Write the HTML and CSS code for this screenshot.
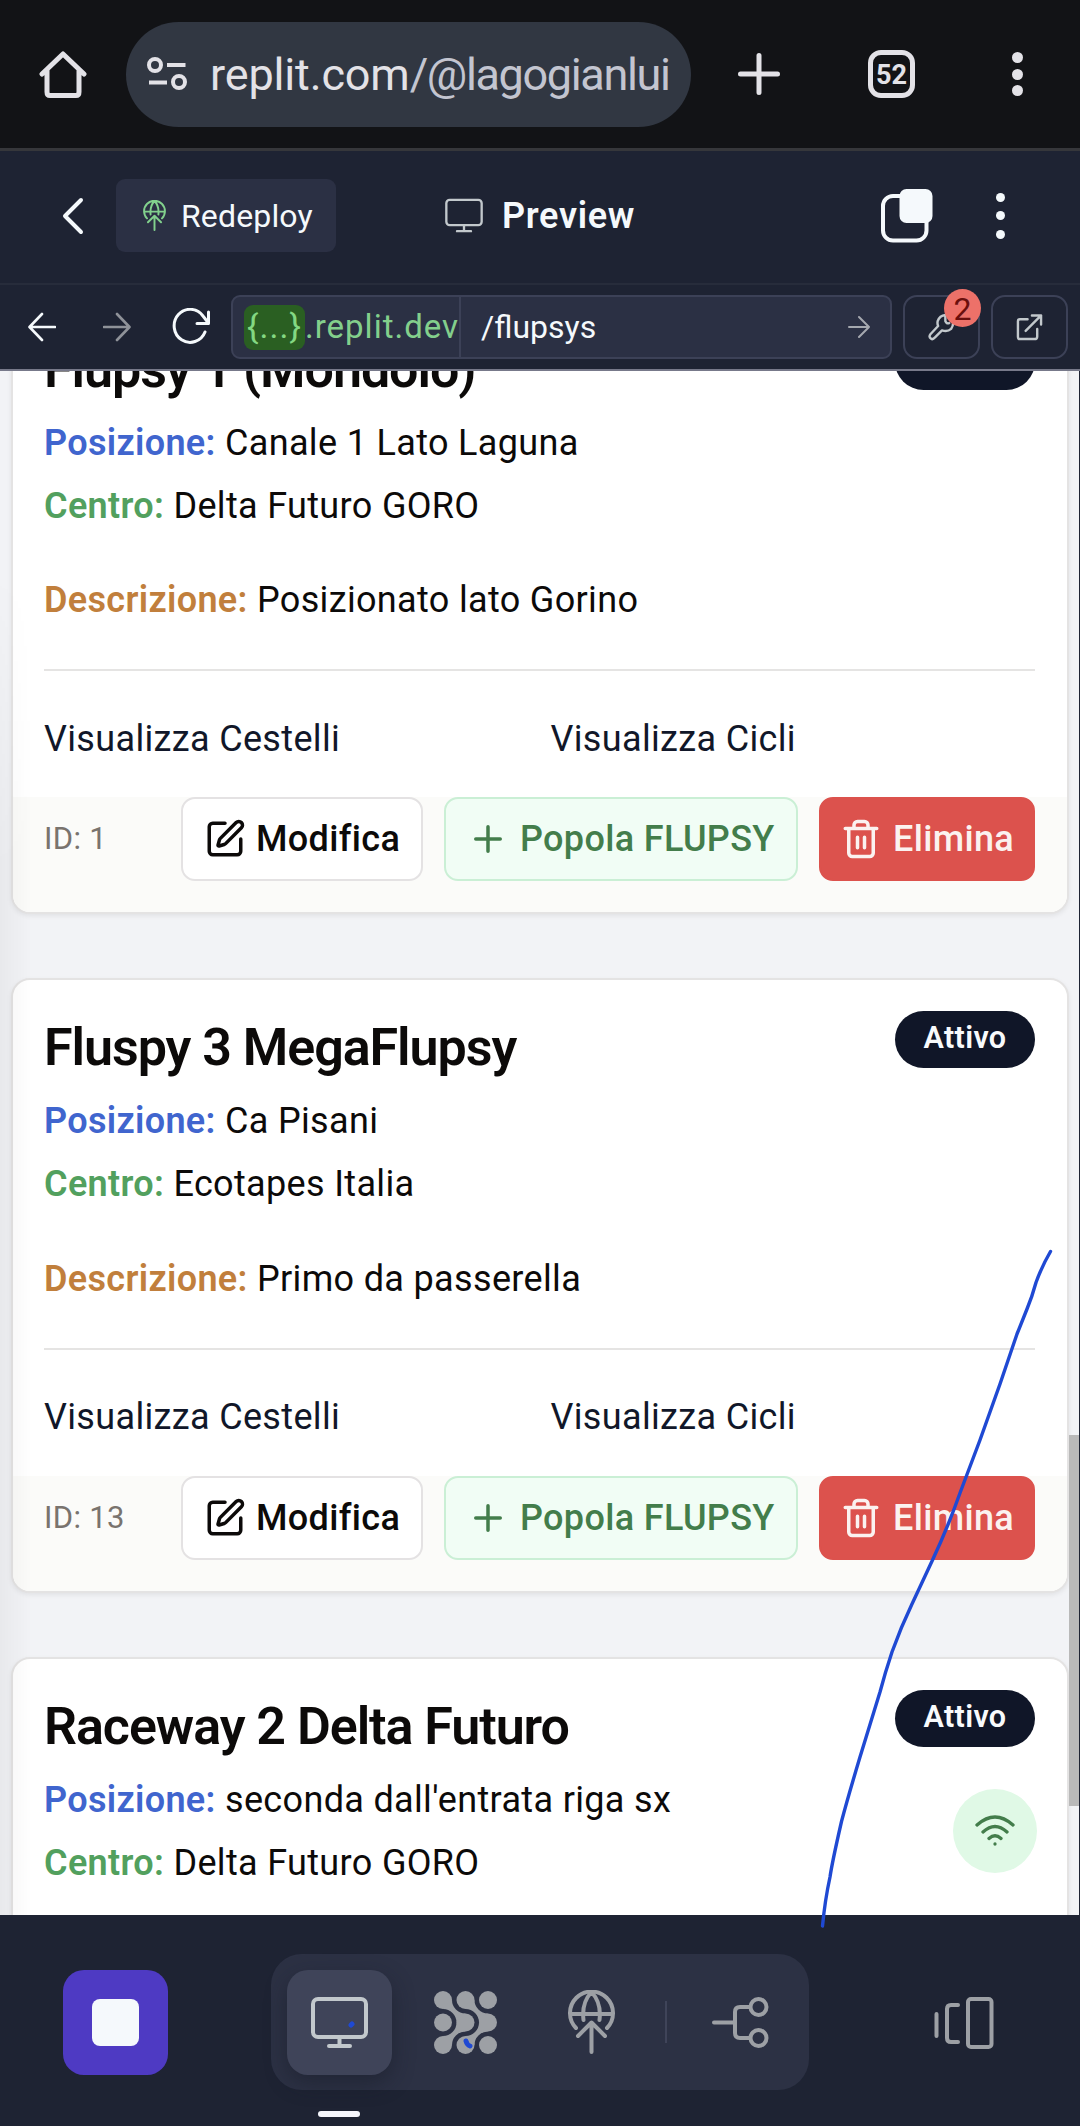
FILE: index.html
```html
<!DOCTYPE html>
<html lang="it">
<head>
<meta charset="utf-8">
<title>Flupsys</title>
<link rel="stylesheet" href="styles.css">
</head>
<body>
<svg class="defs" aria-hidden="true">
  <symbol id="edit" viewBox="0 0 24 24"><path d="M12 3H5a2 2 0 0 0-2 2v14a2 2 0 0 0 2 2h14a2 2 0 0 0 2-2v-7"/><path d="M18.375 2.625a1 1 0 0 1 3 3l-9.013 9.014a2 2 0 0 1-.853.505l-2.873.84a.5.5 0 0 1-.62-.62l.84-2.873a2 2 0 0 1 .506-.852z"/></symbol>
  <symbol id="plus" viewBox="0 0 24 24"><path d="M5 12h14M12 5v14"/></symbol>
  <symbol id="trash" viewBox="0 0 24 24"><path d="M3 6h18M19 6v14a2 2 0 0 1-2 2H7a2 2 0 0 1-2-2V6M8 6V4a2 2 0 0 1 2-2h4a2 2 0 0 1 2 2v2M10 11v6M14 11v6"/></symbol>
  <symbol id="monitor" viewBox="0 0 57 51"><rect x="2" y="2" width="53" height="38" rx="5"/><path d="M28.500 40v9M18 49h21"/></symbol>
  <symbol id="deploy" viewBox="0 0 47 64"><path d="M8 38A21.500 21.500 0 1 1 39 38M2 24h43M15.500 30C14 18 17 9 23.500 2C30 9 33 18 31.500 30M23.500 62V33M10 46L23.500 32.500L37 46"/></symbol>
</svg>

<header class="browser">
  <svg class="home" viewBox="0 0 48 48"><path d="M3 24L24 4L45 24M8 20V42Q8 45.500 11 45.500H37Q40 45.500 40 42V20"/></svg>
  <div class="omnibox">
    <svg class="tune" viewBox="0 0 40 34"><circle cx="8" cy="8" r="6"/><path d="M20 8h18.500M2 25.500h18"/><circle cx="32" cy="25" r="6"/></svg>
    <div class="address"><span class="domain">replit.com</span>/@lagogianluigi</div>
  </div>
  <svg class="newtab" viewBox="0 0 42 42"><path d="M2.500 21h37M21 2.500v37"/></svg>
  <div class="tabs">52</div>
  <div class="dots"><i></i><i></i><i></i></div>
</header>

<div class="titlebar">
  <svg class="chevron" viewBox="0 0 22 38"><path d="M19 3L3 19L19 35"/></svg>
  <div class="redeploy"><svg><use href="#deploy"/></svg><span>Redeploy</span></div>
  <div class="preview"><svg><use href="#monitor"/></svg><span>Preview</span></div>
  <svg class="windows" viewBox="0 0 52 54"><rect x="2" y="7" width="43.500" height="44.500" rx="10"/><rect class="front" x="18.500" width="33" height="34" rx="7"/></svg>
  <div class="dots small"><i></i><i></i><i></i></div>
</div>

<div class="toolbar">
  <svg class="arrow" viewBox="0 0 28 30"><path d="M27 15H2M14 2L1.500 15L14 28"/></svg>
  <svg class="arrow fwd" viewBox="0 0 28 30"><path d="M1 15h25M14 2L26.500 15L14 28"/></svg>
  <svg class="reload" viewBox="0 0 40 38"><path d="M34 24A16 16.500 0 1 1 32 8L37 14.500M37.500 4V15.500H26"/></svg>
  <div class="field">
    <span class="chip">{...}</span><span class="host">.replit.dev</span><span class="path">/flupsys</span>
    <svg class="go" viewBox="0 0 22 24"><path d="M1 12h20M11 2L21 12L11 22"/></svg>
  </div>
  <div class="tool">
    <svg viewBox="0 0 28 28"><path d="M18 1.500Q12 2 10 8Q9.500 11 10.500 13L2.500 21.500Q.5 24 3 26Q5 27.500 7 25L14.500 17.500Q20 19.500 24 16Q26 13 26 10M18 2V8Q19 11 22 10"/></svg>
    <span class="badge">2</span>
  </div>
  <div class="tool open"><svg viewBox="0 0 28 28"><path d="M12 6H4Q2 6 2 8V24Q2 26.500 4 26.500H19Q22 26.500 22 24V16M10 18L26 2M16.500 2H26V11.500"/></svg></div>
</div>

<main class="viewport">
  <div class="cards">
    <article class="card">
      <div class="head"><h2>Flupsy 1 (Mondolo)</h2><span class="status">Attivo</span></div>
      <p class="info"><b class="pos">Posizione:</b> Canale 1 Lato Laguna</p>
      <p class="info"><b class="cen">Centro:</b> Delta Futuro GORO</p>
      <p class="info desc"><b>Descrizione:</b> Posizionato lato Gorino</p>
      <div class="links"><a>Visualizza Cestelli</a><a>Visualizza Cicli</a></div>
      <footer><span class="id">ID: 1</span><button class="btn edit"><svg><use href="#edit"/></svg>Modifica</button><button class="btn add"><svg><use href="#plus"/></svg>Popola FLUPSY</button><button class="btn del"><svg><use href="#trash"/></svg>Elimina</button></footer>
    </article>
    <article class="card">
      <div class="head"><h2>Fluspy 3 MegaFlupsy</h2><span class="status">Attivo</span></div>
      <p class="info"><b class="pos">Posizione:</b> Ca Pisani</p>
      <p class="info"><b class="cen">Centro:</b> Ecotapes Italia</p>
      <p class="info desc"><b>Descrizione:</b> Primo da passerella</p>
      <div class="links"><a>Visualizza Cestelli</a><a>Visualizza Cicli</a></div>
      <footer><span class="id">ID: 13</span><button class="btn edit"><svg><use href="#edit"/></svg>Modifica</button><button class="btn add"><svg><use href="#plus"/></svg>Popola FLUPSY</button><button class="btn del"><svg><use href="#trash"/></svg>Elimina</button></footer>
    </article>
    <article class="card">
      <div class="head"><h2>Raceway 2 Delta Futuro</h2><span class="status">Attivo</span></div>
      <p class="info"><b class="pos">Posizione:</b> seconda dall'entrata riga sx</p>
      <p class="info"><b class="cen">Centro:</b> Delta Futuro GORO</p>
    </article>
  </div>
  <div class="edge"></div>
  <div class="thumb"></div>
  <div class="wifi"><svg viewBox="0 0 40 32"><path d="M2 10Q20-6 38 10M8 17Q20 6 32 17M14 23.500Q20 18 26 23.500M20 29h.01"/></svg></div>
</main>

<nav class="dock">
  <div class="stop"><i></i></div>
  <div class="group">
    <div class="active"><svg><use href="#monitor"/></svg></div>
    <svg class="agent" viewBox="0 0 63 63"><circle cx="9" cy="9" r="9"/><circle cx="31.500" cy="9" r="9"/><circle cx="54" cy="9" r="9"/><circle cx="9" cy="31.500" r="9"/><circle cx="31.500" cy="31.500" r="9"/><circle cx="54" cy="31.500" r="9"/><circle cx="9" cy="54" r="9"/><circle cx="31.500" cy="54" r="9"/><circle cx="54" cy="54" r="9"/><path d="M18 9A13.500 13.500 0 0 0 31.500 22.500L22.500 31.500A13.500 13.500 0 0 0 9 18ZM40.500 9A13.500 13.500 0 0 0 54 22.500L45 31.500A13.500 13.500 0 0 0 31.500 18ZM22.500 31.500A13.500 13.500 0 0 1 9 45L18 54A13.500 13.500 0 0 1 31.500 40.500ZM45 31.500A13.500 13.500 0 0 1 31.500 45L40.500 54A13.500 13.500 0 0 1 54 40.500Z"/></svg>
    <svg class="globe"><use href="#deploy"/></svg>
    <i class="sep"></i>
    <svg class="branch" viewBox="0 0 57 51"><path d="M2 25.500H23M38 10H28Q23 10 23 15V36Q23 41 28 41H38"/><circle cx="46.500" cy="10" r="8"/><circle cx="46.500" cy="41" r="8"/></svg>
  </div>
  <svg class="panels" viewBox="0 0 60 52"><path d="M2.500 17V39M24 8H17Q13 8 13 12V41Q13 45 17 45H24"/><rect x="34" y="2" width="23.500" height="48" rx="3"/></svg>
  <i class="indicator"></i>
</nav>

<svg class="ink" viewBox="0 0 1080 2126"><path d="M1050.500 1251.500Q1042 1266 1036 1282.500Q1032 1297 1027 1309L1017 1334L1000 1384L980 1440L960 1493Q948 1527 933 1559L912 1604Q901 1627 892 1652Q885 1673 880 1692L860 1757Q848 1797 841.500 1821.500Q832 1863 830 1877Q825 1900 822.500 1926"/><path d="M351 2025L352 2024M466 2041Q467 2045 470 2046" class="fat"/></svg>
</body>
</html>
```
FILE: styles.css
```css
* { box-sizing: border-box; }
body { margin: 0; width: 1080px; height: 2126px; overflow: hidden; position: relative; display: flex; flex-direction: column; background: #1e2333; font-family: Roboto, "Noto Sans", sans-serif; color: #0c0a09; }
svg { display: block; flex: none; fill: none; stroke: currentColor; stroke-linecap: round; stroke-linejoin: round; }
.defs { position: absolute; width: 0; height: 0; }

.browser { height: 151px; flex: none; display: flex; align-items: center; padding-left: 39px; background: #121316; border-bottom: 3px solid #36373b; color: #e3e2e7; }
.home { width: 48px; height: 48px; stroke-width: 5; }
.omnibox { width: 565px; height: 105px; margin-left: 39px; border-radius: 53px; background: #313742; display: flex; align-items: center; padding-left: 21px; }
.tune { width: 40px; height: 34px; stroke-width: 4; stroke-linecap: butt; }
.address { width: 459px; margin-left: 23px; padding-top: 2px; overflow: hidden; white-space: nowrap; font-size: 45px; line-height: 60px; letter-spacing: -1.350px; color: #c3c5d0; }
.domain { color: #e3e2e7; letter-spacing: -.15px; }
.newtab { width: 42px; height: 42px; margin-left: 47px; stroke-width: 5; }
.tabs { width: 47px; height: 48px; margin-left: 88px; border: 5px solid; border-radius: 13px; font: 700 27px/40px Roboto, sans-serif; text-align: center; }
.dots { display: flex; flex-direction: column; align-items: center; gap: 5.500px; margin-left: 97px; }
.dots i { width: 11px; height: 11px; border-radius: 50%; background: currentColor; }

.titlebar { height: 132px; flex: none; display: flex; align-items: center; padding: 0 0 3px 62px; color: #f5f9fc; }
.chevron { width: 22px; height: 38px; stroke-width: 4; }
.redeploy { width: 220px; height: 73px; margin-left: 32px; padding-left: 27px; border-radius: 9px; background: #2b3044; display: flex; align-items: center; font-size: 32px; letter-spacing: .15px; }
.redeploy svg { width: 23px; height: 31px; color: #82d18d; stroke-width: 4; }
.redeploy span { margin-left: 15px; }
.preview { width: 190px; margin-left: 109px; display: flex; align-items: center; font-size: 36px; font-weight: 600; letter-spacing: .7px; white-space: nowrap; }
.preview svg { width: 38px; height: 35px; color: #c2c8cc; stroke-width: 3.500; }
.preview span { margin-left: 19px; }
.windows { width: 52px; height: 54px; margin-left: 246px; stroke-width: 4; }
.front { fill: #f5f9fc; stroke: none; }
.small { gap: 9.500px; margin-left: 63px; }
.small i { width: 9px; height: 9px; }

.toolbar { height: 88px; flex: none; display: flex; align-items: center; padding-left: 28px; border-top: 2px solid #272c3b; border-bottom: 2px solid #77798a; color: #f5f9fc; }
.arrow { width: 28px; height: 30px; stroke-width: 2.600; }
.fwd { margin-left: 47px; color: #8f9299; }
.reload { width: 40px; height: 38px; margin-left: 40px; stroke-width: 3; }
.field { width: 661px; height: 64px; margin-left: 20px; border: 2px solid #3c4157; border-radius: 9px; background: #2b3044; display: flex; align-items: center; padding-left: 11px; font-size: 32px; white-space: nowrap; }
.chip { width: 61px; height: 45px; border-radius: 9px; background: #2a5f22; color: #83d882; text-align: center; font-size: 34px; letter-spacing: 1px; line-height: 42px; }
.host { width: 156px; height: 60px; border-right: 2px solid #3c4157; color: #83cf8c; font-size: 33px; letter-spacing: 1px; line-height: 59px; }
.path { width: 387px; padding-left: 20px; }
.go { width: 22px; height: 24px; stroke-width: 2; color: #a5a8af; }
.tool { position: relative; width: 77px; height: 64px; margin-left: 11px; border: 2px solid #3c4157; border-radius: 14px; display: grid; place-items: center; color: #c2c8cc; }
.tool svg { width: 27px; height: 28px; stroke-width: 2.500; }
.badge { position: absolute; top: -8px; right: -3px; width: 37px; height: 38px; border-radius: 50%; background: #ed7169; color: #6b0f0d; font-size: 32px; line-height: 40px; text-align: center; }

.viewport { position: relative; width: 1079px; height: 1544px; flex: none; overflow: hidden; background: #f2f3f6; }
.cards { display: flex; flex-direction: column; gap: 64px; margin-top: -71.300px; padding: 0 10px 0 11px; }
.card { height: 614.700px; flex: none; border: 2px solid #e4e3e3; border-radius: 19px; background: #fff; box-shadow: 0 2px 5px rgba(0,0,0,.07); overflow: hidden; font-size: 36px; letter-spacing: .34px; }
.head { display: flex; justify-content: space-between; align-items: flex-start; padding: 31px 32px 0 31px; height: 110px; }
h2 { margin: 5px 0 0; font-size: 52px; line-height: 63px; font-weight: 600; letter-spacing: -1.050px; white-space: nowrap; }
.status { width: 140px; height: 57px; border-radius: 29px; background: #101628; color: #f8fafc; font-size: 30.500px; line-height: 54px; font-weight: 600; text-align: center; }
.info { margin: 0 0 0 31px; line-height: 63px; white-space: nowrap; }
.info b { font-weight: 600; color: #c17f3c; }
.info .pos { color: #4065ce; }
.info .cen { color: #52a05e; }
.desc { margin-top: 31.500px; }
.links { display: grid; grid-template-columns: 1fr 1fr; gap: 22px; margin: 37px 32px 0 31px; padding-top: 36.500px; height: 128px; border-top: 2px solid #e5e4e3; line-height: 63px; color: #111729; }
.card footer { height: 120px; display: flex; align-items: flex-start; padding: 0 32px 0 31px; background: #fbfbf9; }
.id { width: 137px; font-size: 31px; line-height: 84px; color: #79736e; }
.btn { height: 84px; padding: 0 0 0 21px; border: 2px solid #e4e2e3; border-radius: 14px; background: #fff; display: flex; align-items: center; font: 500 36px Roboto, sans-serif; letter-spacing: .34px; color: #0c0a09; white-space: nowrap; }
.btn svg { width: 42px; height: 42px; margin-right: 10px; stroke-width: 2; }
.edit { width: 242px; }
.add { width: 354px; margin-left: 21px; background: #f1fdf5; border-color: #caefd5; color: #437d4b; }
.add svg { margin-right: 11px; }
.del { width: 216px; margin-left: 21px; background: #dc524d; border-color: #dc524d; color: #fbf2f0; padding-left: 19px; }
.del svg { margin-right: 11px; }

.edge { position: absolute; left: 0; top: 200px; width: 32px; height: 1344px; background: linear-gradient(90deg, rgba(0,0,0,.04), transparent); -webkit-mask-image: linear-gradient(transparent, #000 300px); }
.thumb { position: absolute; right: 0; top: 1064px; width: 10px; height: 371px; background: #b9b9b9; }
.wifi { position: absolute; left: 953px; top: 1418px; width: 84px; height: 84px; border-radius: 50%; background: #e0f9e6; display: grid; place-items: center; color: #437d4b; }
.wifi svg { width: 40px; height: 32px; stroke-width: 3.300; }

.dock { position: relative; height: 211px; flex: none; display: flex; align-items: center; padding: 4px 0 0 63px; color: #9da0a5; }
.stop { width: 105px; height: 105px; border-radius: 21px; background: #4e3ac3; display: grid; place-items: center; }
.stop i { width: 47px; height: 47px; border-radius: 8px; background: #f5f9fc; }
.group { width: 538px; height: 136px; margin: -1px 0 0 103px; border-radius: 31px; background: #2c3144; display: flex; align-items: center; padding-left: 16px; }
.active { width: 105px; height: 105px; border-radius: 21px; background: #3f4459; color: #c2c8cc; display: grid; place-items: center; box-shadow: 0 8px 22px rgba(20,24,36,.45); }
.active svg, .branch { width: 57px; height: 51px; stroke-width: 4; }
.agent { width: 63px; height: 63px; margin-left: 42px; fill: currentColor; stroke: none; }
.globe { width: 47px; height: 64px; margin-left: 71px; stroke-width: 4; }
.sep { width: 2px; height: 42px; margin-left: 50px; background: #3f4459; }
.branch { margin-left: 45px; }
.panels { width: 60px; height: 52px; margin-left: 125px; stroke-width: 4; }
.indicator { position: absolute; left: 318px; bottom: 9px; width: 42px; height: 6px; border-radius: 3px; background: #f5f6fc; }
.ink { position: absolute; inset: 0; width: 1080px; height: 2126px; color: #1f49d3; stroke-width: 3.400; pointer-events: none; }
.fat { stroke-width: 5; }
```
